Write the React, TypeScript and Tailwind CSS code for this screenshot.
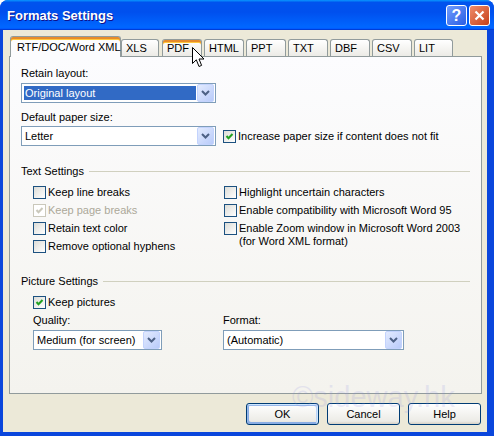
import React from 'react';

// chevron used in every combo box
const DropBtn = () => (
  <div className="w-[17px] h-[18px] shrink-0 rounded-[2px] border border-[#c3d3fd] bg-[linear-gradient(135deg,#e3ebfe,#b9cbfa)] flex items-center justify-center">
    <svg width="9" height="6" viewBox="0 0 9 6">
      <path d="M1 1 L4.5 4.5 L8 1" fill="none" stroke="#4d6185" strokeWidth="2" />
    </svg>
  </div>
);

type SelectProps = { w: string; text: string; hl?: boolean };
const Select = ({ w, text, hl }: SelectProps) => (
  <div className={`h-[20px] border border-[#7f9db9] bg-white flex items-center p-[1px] ${w}`}>
    <div className="flex-1 h-full p-[1px] flex">
      <span className={`flex-1 flex items-center pl-[1px] ${hl ? 'bg-[#316ac5] text-white' : ''}`}>{text}</span>
    </div>
    <DropBtn />
  </div>
);

type CheckProps = { checked?: boolean; disabled?: boolean };
const Check = ({ checked, disabled }: CheckProps) => (
  <span
    className={`w-[13px] h-[13px] shrink-0 border flex items-center justify-center ${
      disabled ? 'border-[#cac8bb] bg-white' : 'border-[#1c5180] bg-[linear-gradient(135deg,#dcdcd7,#ffffff)]'
    }`}
  >
    {checked && (
      <svg width="9" height="9" viewBox="0 0 9 9">
        <polyline points="1.5,4 3.5,6.2 7.5,2" fill="none" stroke={disabled ? '#cac8bb' : '#21a121'} strokeWidth="2" />
      </svg>
    )}
  </span>
);

type RowProps = { label: React.ReactNode; checked?: boolean; disabled?: boolean };
const CheckRow = ({ label, checked, disabled }: RowProps) => (
  <div className="flex items-start gap-[2px]">
    <Check checked={checked} disabled={disabled} />
    <span className={disabled ? 'text-[#aca899]' : ''}>{label}</span>
  </div>
);

const tabs = ['XLS', 'PDF', 'HTML', 'PPT', 'TXT', 'DBF', 'CSV', 'LIT'];
const tabW = ['w-[38px]', 'w-[40px] ml-[3px]', 'w-[40px] ml-[2px]', 'w-[40px] ml-[2px]', 'w-[40px] ml-[2px]', 'w-[40px] ml-[2px]', 'w-[40px] ml-[2px]', 'w-[39px] ml-[2px]'];

const XpButton = ({ label, focus }: { label: string; focus?: boolean }) => (
  <button
    type="button"
    className={`w-[73px] h-[22px] rounded-[3px] border border-[#003c74] bg-[linear-gradient(180deg,#ffffff,#ecebe6_86%,#d6d0c5)] text-black ${
      focus ? 'shadow-[inset_-1px_1px_#cee7ff,inset_1px_2px_#98b8ea,inset_-2px_2px_#bcd4f6,inset_1px_-1px_#89ade4,inset_2px_-2px_#89ade4]' : ''
    }`}
  >
    {label}
  </button>
);

const App: React.FC = () => {
  return (
    <div className="w-[494px] h-[436px] bg-white relative font-['Liberation_Sans',Arial,sans-serif] text-[11px] leading-[13px] text-black">
      <div className="w-full h-full flex flex-col rounded-t-[8px] overflow-hidden bg-[#0a46dc]">
        {/* title bar */}
        <div className="h-[30px] shrink-0 flex items-center pl-[7px] pr-[4px] bg-[linear-gradient(180deg,#0997ff,#0053ee_8%,#0050ee_40%,#0066ff_88%,#0066ff_93%,#005bff_95%,#003dd7_96%,#003dd7)]">
          <span className="flex-1 text-white font-bold text-[13px] [text-shadow:1px_1px_#0f1089]">Formats Settings</span>
          <div className="flex gap-[2px]">
            <div className="w-[21px] h-[21px] rounded-[3px] border border-white bg-[linear-gradient(135deg,#6f9cfd,#2b5de4)] flex items-center justify-center text-white font-bold text-[16px]">?</div>
            <div className="w-[21px] h-[21px] rounded-[3px] border border-white bg-[linear-gradient(135deg,#ef8c6a,#c6401a)] flex items-center justify-center">
              <svg width="11" height="11" viewBox="0 0 11 11">
                <path d="M1.5 1.5 L9.5 9.5 M9.5 1.5 L1.5 9.5" stroke="white" strokeWidth="2.2" />
              </svg>
            </div>
          </div>
        </div>

        {/* body */}
        <div className="flex-1 ml-[3px] mr-[7px] mb-[4px] bg-[#ece9d8] pt-[6px] pl-[6px] pr-[5px] flex flex-col">
          <div className="flex items-end h-[20px] pl-[1px]">
            <div className="relative z-10 shrink-0 whitespace-nowrap w-[111px] h-[21px] -mb-px rounded-t-[3px] border border-b-0 border-[#919b9c] bg-[#fcfcfe] shadow-[inset_0_2px_#e68b2c,inset_0_3px_#ffc73c] pl-[6px] pt-[4px]">
              RTF/DOC/Word XML
            </div>
            {tabs.map((t, i) => (
              <div
                key={t}
                className={`shrink-0 h-[17px] rounded-t-[3px] border border-b-0 border-[#919b9c] bg-[linear-gradient(180deg,#ffffff,#ecebe6)] pl-[4px] pt-[2px] ${tabW[i]} ${
                  t === 'PDF' ? 'shadow-[inset_0_2px_#e68b2c,inset_0_3px_#ffc73c]' : ''
                }`}
              >
                {t}
              </div>
            ))}
          </div>

          {/* tab panel */}
          <div className="h-[338px] border border-[#919b9c] bg-[linear-gradient(180deg,#fcfcfe,#f4f3ee)] pl-[11px] pr-[11px] flex flex-col">
            <div className="mt-[10px]">Retain layout:</div>
            <div className="mt-[3px]">
              <Select w="w-[195px]" text="Original layout" hl />
            </div>
            <div className="mt-[8px]">Default paper size:</div>
            <div className="mt-[2px] flex items-center gap-[7px]">
              <Select w="w-[195px]" text="Letter" />
              <CheckRow label="Increase paper size if content does not fit" checked />
            </div>

            <div className="mt-[19px] flex items-center gap-[5px]">
              <span>Text Settings</span>
              <div className="flex-1 h-px bg-[#d0d0bf]" />
            </div>
            <div className="mt-[8px] pl-[12px] grid grid-cols-[190px_1fr]">
              <div className="flex flex-col gap-[5px]">
                <CheckRow label="Keep line breaks" />
                <CheckRow label="Keep page breaks" checked disabled />
                <CheckRow label="Retain text color" />
                <CheckRow label="Remove optional hyphens" />
              </div>
              <div className="flex flex-col gap-[5px] pl-px">
                <CheckRow label="Highlight uncertain characters" />
                <CheckRow label="Enable compatibility with Microsoft Word 95" />
                <CheckRow
                  label={
                    <>
                      Enable Zoom window in Microsoft Word 2003
                      <br />
                      (for Word XML format)
                    </>
                  }
                />
              </div>
            </div>

            <div className="mt-[22px] flex items-center gap-[5px]">
              <span>Picture Settings</span>
              <div className="flex-1 h-px bg-[#d0d0bf]" />
            </div>
            <div className="mt-[8px] pl-[12px]">
              <CheckRow label="Keep pictures" checked />
            </div>
            <div className="mt-[5px] pl-[12px] grid grid-cols-[190px_1fr]">
              <div>
                <div>Quality:</div>
                <div className="mt-[3px]">
                  <Select w="w-[129px]" text="Medium (for screen)" />
                </div>
              </div>
              <div>
                <div>Format:</div>
                <div className="mt-[3px]">
                  <Select w="w-[181px]" text="(Automatic)" />
                </div>
              </div>
            </div>
          </div>

          <div className="mt-[9px] flex justify-end gap-[8px] pr-[1px]">
            <XpButton label="OK" focus />
            <XpButton label="Cancel" />
            <XpButton label="Help" />
          </div>
        </div>
      </div>

      {/* mouse pointer over the PDF tab */}
      <svg className="absolute left-[192px] top-[47px]" width="13" height="21" viewBox="0 0 13 21">
        <path d="M0.5 0.5 L0.5 16.5 L4.3 12.8 L7 19.5 L9.6 18.4 L7 12 L12 12 Z" fill="white" stroke="black" strokeWidth="1" />
      </svg>

      {/* watermark */}
      <div className="absolute left-[292px] top-[381px] text-[29px] leading-[32px] text-[#8c8ce0] opacity-[0.16] pointer-events-none">
        ©sideway.hk
      </div>
    </div>
  );
};

export default App;
